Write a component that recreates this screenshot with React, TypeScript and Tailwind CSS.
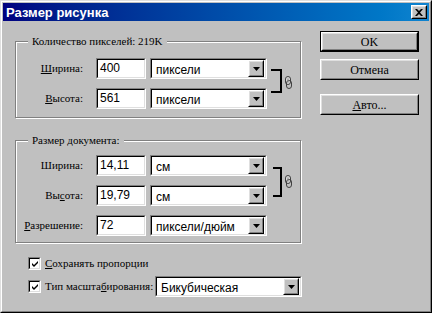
import React from 'react';

const serif = { fontFamily: '"Liberation Serif", "DejaVu Serif", serif' };
const sans = { fontFamily: '"Liberation Sans", Arial, sans-serif' };

const Sunken: React.FC<{ className?: string; children?: React.ReactNode }> = ({ className = '', children }) => (
  <div className={`border border-t-[#808080] border-l-[#808080] border-r-white border-b-white ${className}`}>
    <div className="h-full w-full border border-t-black border-l-black border-r-[#dfdfdf] border-b-[#dfdfdf] bg-white">
      {children}
    </div>
  </div>
);

const Raised: React.FC<{ className?: string; children?: React.ReactNode }> = ({ className = '', children }) => (
  <div className={`border border-t-white border-l-white border-r-black border-b-black ${className}`}>
    <div className="h-full w-full border border-t-[#dfdfdf] border-l-[#dfdfdf] border-r-[#808080] border-b-[#808080] bg-[#c0c0c0] flex items-center justify-center">
      {children}
    </div>
  </div>
);

const Arrow = () => (
  <svg width="7" height="4" viewBox="0 0 7 4">
    <path d="M0 0h7L3.5 4z" fill="#000" />
  </svg>
);

const NumberInput: React.FC<{ value: string }> = ({ value }) => (
  <Sunken className="w-[50px] h-[21px]">
    <div className="pl-[2px] pt-[2px] text-[12px] leading-[13px] text-black" style={sans}>
      {value}
    </div>
  </Sunken>
);

const Select: React.FC<{ value: string; width: string }> = ({ value, width }) => (
  <Sunken className={`${width} h-[21px]`}>
    <div className="flex h-full items-center justify-between pl-[4px] pr-px">
      <span className="text-[12px] leading-[14px] text-black mt-[2px]" style={sans}>
        {value}
      </span>
      <Raised className="w-[16px] h-[17px]">
        <Arrow />
      </Raised>
    </div>
  </Sunken>
);

const Label: React.FC<{ children: React.ReactNode }> = ({ children }) => (
  <div className="w-[67px] text-right text-[11px] leading-[13px] text-black whitespace-nowrap" style={serif}>
    {children}
  </div>
);

const Row: React.FC<{ label: React.ReactNode; value: string; unit: string }> = ({ label, value, unit }) => (
  <div className="flex items-center h-[21px]">
    <Label>{label}</Label>
    <div className="ml-[13px]">
      <NumberInput value={value} />
    </div>
    <div className="ml-[4px]">
      <Select value={unit} width="w-[117px]" />
    </div>
  </div>
);

const Chain: React.FC<{ x: number; y: number }> = ({ x, y }) => (
  <g transform={`translate(${x} ${y})`} fill="none" strokeWidth="1">
    <rect x="0.5" y="0.5" width="5" height="8" rx="2.5" stroke="#404040" fill="#d8d8d8" />
    <rect x="1.5" y="4.5" width="5" height="8" rx="2.5" stroke="#404040" />
    <rect x="2.5" y="2.5" width="1" height="4" fill="#808080" stroke="none" />
  </g>
);

const Bracket: React.FC<{ h: number; top: number; bottom: number; left: number; chainY: number }> = ({ h, top, bottom, left, chainY }) => (
  <svg width="28" height={h} viewBox={`0 0 28 ${h}`} className="block">
    <path d={`M${left} ${top}H15V${bottom + 2}H${left}V${bottom}H13V${top + 2}H${left}z`} fill="#000" />
    <Chain x={18} y={chainY} />
  </svg>
);

const Group: React.FC<{ title: React.ReactNode; height: string; pt: string; children: React.ReactNode }> = ({ title, height, pt, children }) => (
  <div className={`relative w-[286px] ${height} border border-[#808080] shadow-[1px_1px_0_#fff,inset_1px_1px_0_#fff] ${pt}`}>
    <div className="absolute left-[12px] -top-[7px] bg-[#c0c0c0] px-[4px] text-[11px] leading-[13px] text-black whitespace-nowrap" style={serif}>
      {title}
    </div>
    {children}
  </div>
);

const Checkbox = () => (
  <Sunken className="w-[13px] h-[13px] shrink-0">
    <svg width="11" height="11" viewBox="0 0 11 11" className="block">
      <path d="M2 4l2 2 4-4v2l-4 4-2-2z" fill="#000" />
    </svg>
  </Sunken>
);

const Button: React.FC<{ children: React.ReactNode; isDefault?: boolean }> = ({ children, isDefault }) => (
  <div className={`w-[99px] h-[21px] ${isDefault ? 'border border-black' : ''}`}>
    <Raised className="h-full w-full">
      <span className="text-[12px] leading-[14px] text-black" style={serif}>
        {children}
      </span>
    </Raised>
  </div>
);

export default function App() {
  return (
    <div className="w-[432px] h-[313px] bg-[#c0c0c0] border border-t-[#dfdfdf] border-l-[#dfdfdf] border-r-black border-b-black select-none">
      <div className="h-full border border-t-white border-l-white border-r-[#808080] border-b-[#808080] p-px flex flex-col">
        {/* Title bar */}
        <div className="h-[18px] flex items-center justify-between bg-gradient-to-r from-[#000080] to-[#1084d0] pl-[3px] pr-[2px]">
          <span className="text-white font-bold text-[13px] leading-[15px]" style={sans}>
            Размер рисунка
          </span>
          <Raised className="w-[16px] h-[14px]">
            <svg width="8" height="7" viewBox="0 0 8 7">
              <path d="M0 0h2l2 2 2-2h2L5 3.5 8 7H6L4 5 2 7H0l3-3.5z" fill="#000" />
            </svg>
          </Raised>
        </div>

        <div className="flex flex-1">
          {/* Left column */}
          <div className="pl-[12px] pt-[20px]">
            <Group title="Количество пикселей: 219K" height="h-[77px]" pt="pt-[16px]">
              <div className="flex">
                <div className="flex flex-col gap-[9px]">
                  <Row label={<><u>Ш</u>ирина:</>} value="400" unit="пиксели" />
                  <Row label={<><u>В</u>ысота:</>} value="561" unit="пиксели" />
                </div>
                <Bracket h={51} top={11} bottom={33} left={4} chainY={18} />
              </div>
            </Group>

            <div className="mt-[22px]">
              <Group title={<>Размер <u>д</u>окумента:</>} height="h-[103px]" pt="pt-[14px]">
                <div className="flex">
                  <div className="flex flex-col gap-[9px]">
                    <Row label="Ширина:" value="14,11" unit="см" />
                    <Row label={<>Вы<u>с</u>ота:</>} value="19,79" unit="см" />
                    <Row label={<><u>Р</u>азрешение:</>} value="72" unit="пиксели/дюйм" />
                  </div>
                  <Bracket h={81} top={12} bottom={40} left={6} chainY={20} />
                </div>
              </Group>
            </div>

            <div className="pl-[13px]">
              <div className="mt-[14px] flex items-center h-[13px] gap-[4px]">
                <Checkbox />
                <span className="text-[11px] leading-[13px] text-black whitespace-nowrap" style={serif}>
                  <u>С</u>охранять пропорции
                </span>
              </div>
              <div className="mt-[6px] flex items-center h-[21px]">
                <Checkbox />
                <span className="ml-[4px] w-[110px] text-[11px] leading-[13px] text-black whitespace-nowrap" style={serif}>
                  Тип масшта<u>б</u>ирования:
                </span>
                <Select value="Бикубическая" width="w-[147px]" />
              </div>
            </div>
          </div>

          {/* Right column */}
          <div className="ml-[18px] pt-[10px] flex flex-col">
            <Button isDefault>OK</Button>
            <div className="mt-[7px]">
              <Button>Отмена</Button>
            </div>
            <div className="mt-[14px]">
              <Button>
                <u>А</u>вто...
              </Button>
            </div>
          </div>
        </div>
      </div>
    </div>
  );
}
